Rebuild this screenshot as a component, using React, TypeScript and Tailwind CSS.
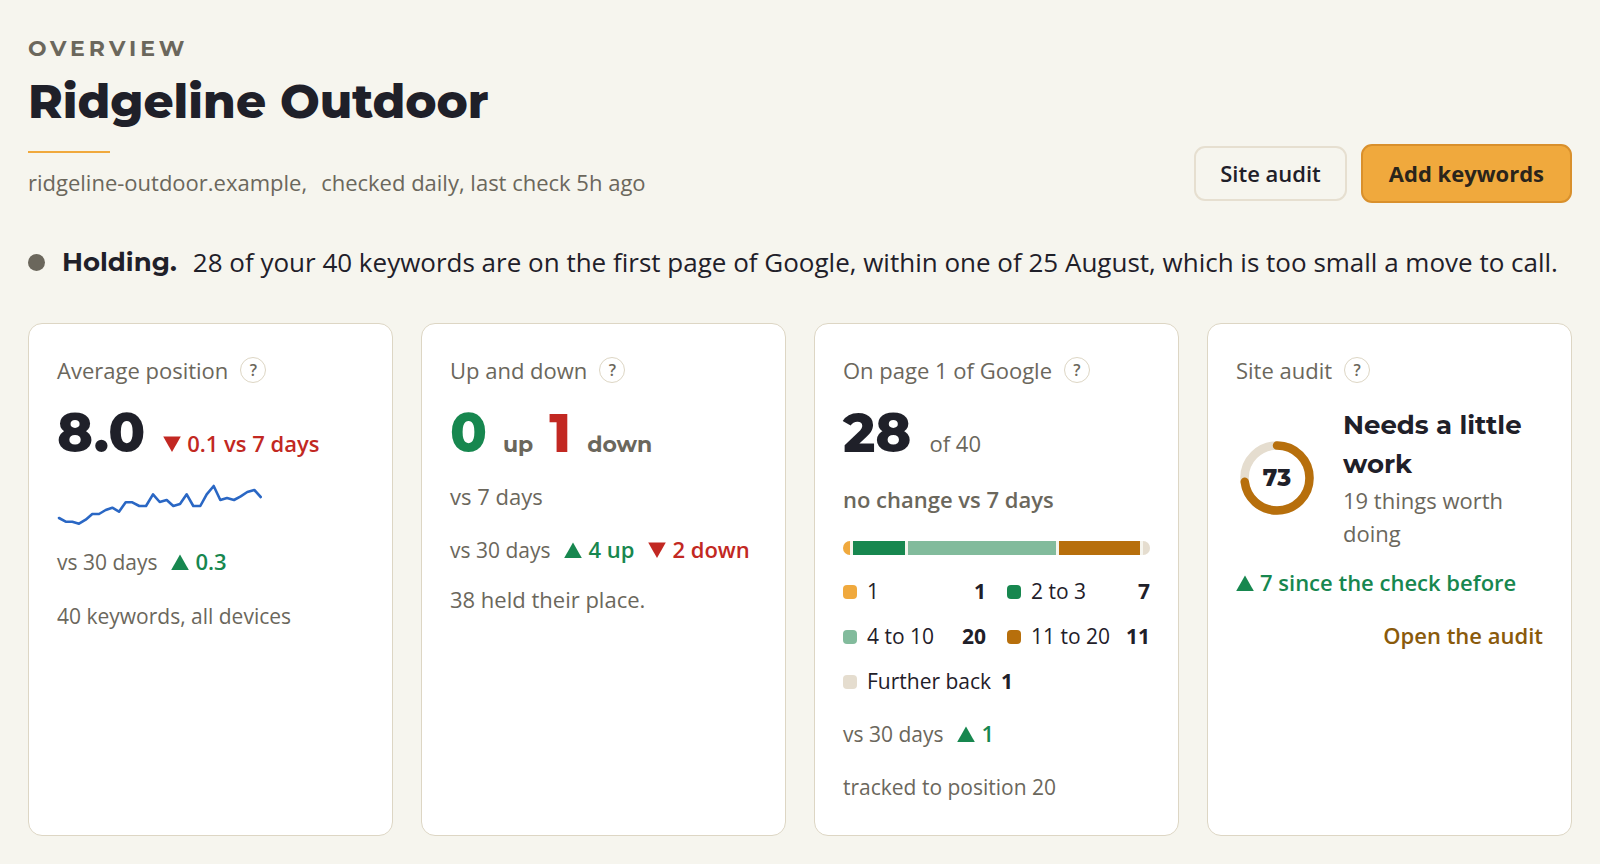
import React from 'react';
import clsx from 'clsx';

const display = "font-['Montserrat','Inter',sans-serif]";

const trend: [number, number][] = [
  [2, 40], [8.7, 43.7], [15.3, 43.7], [22, 45.7], [28.7, 41.7], [35.3, 36], [42, 36], [48.7, 32],
  [55.3, 29.7], [62, 33.7], [68.7, 24.3], [75.3, 24.3], [82.3, 28], [89, 28], [96, 16.3], [102.7, 24],
  [109.7, 22], [116.3, 28], [123, 26], [129.7, 16.3], [136.3, 28], [143.3, 28], [149.7, 16.3], [156.7, 8],
  [163.3, 22], [170, 20], [177, 22], [183.7, 18.3], [190.3, 14], [197.3, 12], [203.7, 19],
];

const bands = [
  { label: '1', count: 1, color: 'bg-[#f0a93d]' },
  { label: '2 to 3', count: 7, color: 'bg-[#17874f]' },
  { label: '4 to 10', count: 20, color: 'bg-[#82bb9c]' },
  { label: '11 to 20', count: 11, color: 'bg-[#b76f0c]' },
  { label: 'Further back', count: 1, color: 'bg-[#e5ddcf]' },
];

const Delta = ({ dir, children }: { dir: 'up' | 'down'; children: React.ReactNode }) => (
  <span
    className={clsx(
      'inline-flex items-baseline gap-[6px] whitespace-nowrap font-semibold',
      dir === 'up' ? 'text-[#17874f]' : 'text-[#c22822]'
    )}
  >
    <svg width="18" height="16" viewBox="0 0 18 16" fill="currentColor" aria-hidden="true">
      <path d={dir === 'up' ? 'M9 .5 17.8 16H.2Z' : 'M.2 .5h17.6L9 16Z'} />
    </svg>
    <span>{children}</span>
  </span>
);

const Card = ({ title, children }: { title: string; children: React.ReactNode }) => (
  <section className="flex min-w-0 flex-col rounded-[14px] border border-[#ddd6c4] bg-white px-7 pt-7 pb-[31px]">
    <div className="mb-[15px] flex h-9 items-center gap-3 text-[#6b675c]">
      <h2>{title}</h2>
      <button
        type="button"
        aria-label={`About ${title}`}
        className="flex size-[26px] items-center justify-center rounded-full border border-[#ddd6c4] text-base leading-none font-semibold"
      >
        ?
      </button>
    </div>
    {children}
  </section>
);

const Big = ({ className, children }: { className?: string; children: React.ReactNode }) => (
  <span className={clsx(display, 'text-[54px] leading-[60px] font-extrabold', className)}>{children}</span>
);

const Versus = ({ children }: { children: React.ReactNode }) => (
  <div className="flex items-baseline gap-[14px]">
    <span className="text-[21px] whitespace-nowrap text-[#6b675c]">vs 30 days</span>
    {children}
  </div>
);

const Ring = ({ score }: { score: number }) => {
  const length = 2 * Math.PI * 32.5;
  return (
    <svg width="82" height="82" viewBox="0 0 82 82" className="shrink-0" role="img" aria-label={`Score ${score}`}>
      <circle cx="41" cy="41" r="32.5" fill="none" stroke="#e5ddcf" strokeWidth="8.5" />
      <circle
        cx="41"
        cy="41"
        r="32.5"
        fill="none"
        stroke="#b76f0c"
        strokeWidth="8.5"
        strokeLinecap="round"
        strokeDasharray={`${(length * score) / 100} ${length}`}
        transform="rotate(-90 41 41)"
      />
      <text x="41" y="49" textAnchor="middle" fill="#1f2029" className={clsx(display, 'text-[23px] font-extrabold')}>
        {score}
      </text>
    </svg>
  );
};

export default function App() {
  return (
    <main className="min-h-screen bg-[#f6f5ee] px-7 pt-8 pb-7 font-['Open_Sans',sans-serif] text-[22px] leading-[33px] text-[#1f2029]">
      <header className="flex flex-wrap items-end justify-between gap-6">
        <div className="pb-1">
          <p className={clsx(display, 'font-bold tracking-[0.18em] text-[#6b675c] uppercase')}>Overview</p>
          <h1 className={clsx(display, 'mt-[10px] text-[47px] leading-[53px] font-extrabold')}>Ridgeline Outdoor</h1>
          <div className="mt-[23px] h-0.5 w-[82px] bg-[#f0a93d]" />
          <p className="mt-[13px] flex flex-wrap gap-x-[14px] text-[#6b675c]">
            <span>ridgeline-outdoor.example,</span>
            <span>checked daily, last check 5h ago</span>
          </p>
        </div>
        <div className="flex items-center gap-[14px]">
          <button type="button" className="rounded-[11px] border-2 border-[#e6dfd0] px-6 py-[9px] font-semibold">
            Site audit
          </button>
          <button
            type="button"
            className="rounded-[11px] border-2 border-[#d9902c] bg-[#f0a93d] px-[26px] py-[11px] font-bold text-[#2a241b]"
          >
            Add keywords
          </button>
        </div>
      </header>

      <div className="mt-10 flex items-center gap-[17px] text-[26px] leading-[39px]">
        <span className="size-[17px] shrink-0 rounded-full bg-[#6b675c]" />
        <p className="flex flex-wrap items-center gap-x-4">
          <strong className={clsx(display, 'font-bold')}>Holding.</strong>
          <span>
            28 of your 40 keywords are on the first page of Google, within one of 25 August, which is too small a move
            to call.
          </span>
        </p>
      </div>

      <div className="mt-[41px] grid grid-cols-4 gap-7">
        <Card title="Average position">
          <div className="flex items-baseline gap-[18px]">
            <Big>8.0</Big>
            <Delta dir="down">0.1 vs 7 days</Delta>
          </div>
          <svg width="206" height="52" viewBox="0 0 206 52" className="my-[15px]" aria-hidden="true">
            <polyline
              points={trend.map((p) => p.join(',')).join(' ')}
              fill="none"
              stroke="#2a67c4"
              strokeWidth="2.6"
              strokeLinejoin="round"
              strokeLinecap="round"
            />
          </svg>
          <Versus>
            <Delta dir="up">0.3</Delta>
          </Versus>
          <p className="mt-[21px] text-[21px] text-[#6b675c]">40 keywords, all devices</p>
        </Card>

        <Card title="Up and down">
          <div className="flex items-baseline gap-4">
            <Big className="text-[#17874f]">0</Big>
            <span className={clsx(display, 'font-bold text-[#6b675c]')}>up</span>
            <Big className="text-[#c22822]">1</Big>
            <span className={clsx(display, 'font-bold text-[#6b675c]')}>down</span>
          </div>
          <p className="mt-[17px] mb-5 text-[#6b675c]">vs 7 days</p>
          <Versus>
            <Delta dir="up">4 up</Delta>
            <Delta dir="down">2 down</Delta>
          </Versus>
          <p className="mt-4 text-[#6b675c]">38 held their place.</p>
        </Card>

        <Card title="On page 1 of Google">
          <div className="flex items-baseline gap-[18px]">
            <Big>28</Big>
            <span className="text-[#6b675c]">of 40</span>
          </div>
          <p className="mt-5 font-semibold text-[#6b675c]">no change vs 7 days</p>
          <div className="mt-[25px] flex h-[14px] gap-[3px] overflow-hidden rounded-full bg-[#f6f5ee]">
            {bands.map((b) => (
              <span key={b.label} className={b.color} style={{ flex: `${b.count} 1 0%` }} />
            ))}
          </div>
          <ul className="mt-5 mb-[19px] grid grid-cols-2 gap-x-[21px] gap-y-3 text-[21px]">
            {bands.map((b) => (
              <li key={b.label} className="flex items-center gap-[10px] whitespace-nowrap">
                <span className={clsx('size-[14px] shrink-0 rounded-[4px]', b.color)} />
                <span>{b.label}</span>
                <strong className="ml-auto font-bold">{b.count}</strong>
              </li>
            ))}
          </ul>
          <Versus>
            <Delta dir="up">1</Delta>
          </Versus>
          <p className="mt-5 text-[21px] text-[#6b675c]">tracked to position 20</p>
        </Card>

        <Card title="Site audit">
          <div className="mt-[3px] flex items-center gap-[25px]">
            <Ring score={73} />
            <div>
              <p className={clsx(display, 'text-[26px] leading-[39px] font-bold')}>Needs a little work</p>
              <p className="text-[#6b675c]">19 things worth doing</p>
            </div>
          </div>
          <p className="mt-4">
            <Delta dir="up">7 since the check before</Delta>
          </p>
          <a href="#audit" className="mt-5 self-end font-semibold text-[#8a5a0b]">
            Open the audit
          </a>
        </Card>
      </div>
    </main>
  );
}
